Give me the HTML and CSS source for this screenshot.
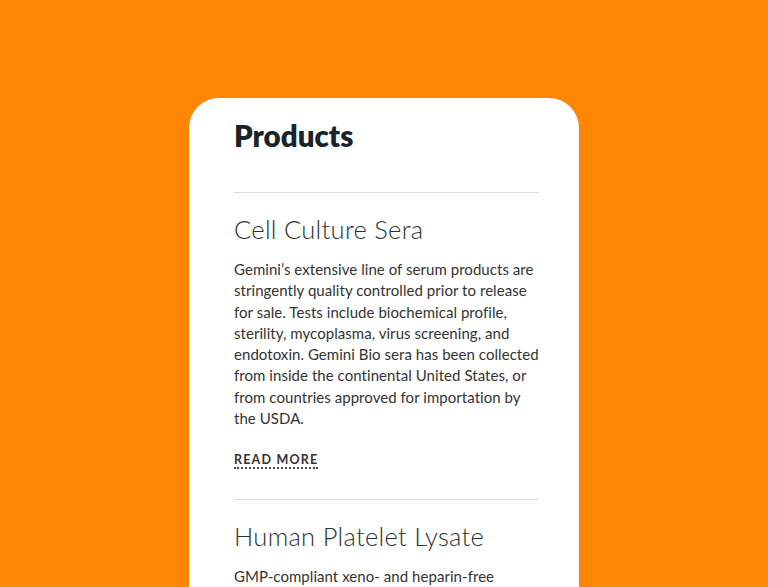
FILE: index.html
```html
<!DOCTYPE html>
<html lang="en">
<head>
<meta charset="utf-8">
<link rel="stylesheet" href="styles.css">
</head>
<body>
<main class="stage">
  <section class="card">
    <h1 class="title">Products</h1>
    <article class="item">
      <h2 class="item-title">Cell Culture Sera</h2>
      <p class="item-text">Gemini’s extensive line of serum products are stringently quality controlled prior to release for sale. Tests include biochemical profile, sterility, mycoplasma, virus screening, and endotoxin. Gemini Bio sera has been collected from inside the continental United States, or from countries approved for importation by the USDA.</p>
      <a class="more" href="#">READ MORE</a>
    </article>
    <article class="item">
      <h2 class="item-title">Human Platelet Lysate</h2>
      <p class="item-text">GMP-compliant xeno- and heparin-free</p>
    </article>
  </section>
</main>
</body>
</html>
```
FILE: styles.css
```css
html, body {
  margin: 0;
  padding: 0;
  height: 100%;
  overflow: hidden;
}
body {
  background: #ff8605;
  font-family: Lato, "Open Sans", sans-serif;
}
.stage {
  display: flex;
  justify-content: center;
  padding-top: 98px;
}
.card {
  width: 390px;
  box-sizing: border-box;
  background: #fff;
  border-radius: 30px 30px 0 0;
  padding: 16px 40px 40px 45px;
  min-height: 600px;
}
.title {
  margin: 0;
  font-size: 29.5px;
  font-weight: 800;
  color: #18232a;
  line-height: 44px;
  padding-bottom: 34px;
}
.item {
  border-top: 1.5px solid #dcdcdc;
  padding-top: 19px;
  padding-bottom: 30px;
}
.item-title {
  margin: 0;
  font-size: 25.5px;
  font-weight: 300;
  letter-spacing: 0.3px;
  color: #2a3236;
  line-height: 34px;
}
.item-text {
  margin: 13px -6px 0 0;
  font-size: 15px;
  letter-spacing: 0.05px;
  line-height: 21.3px;
  color: #333;
}
.more {
  display: inline-block;
  margin-top: 24px;
  font-size: 12.5px;
  font-weight: 700;
  letter-spacing: 1.2px;
  color: #333;
  text-decoration: none;
  border-bottom: 2px dotted #444;
  line-height: 14px;
}
```
